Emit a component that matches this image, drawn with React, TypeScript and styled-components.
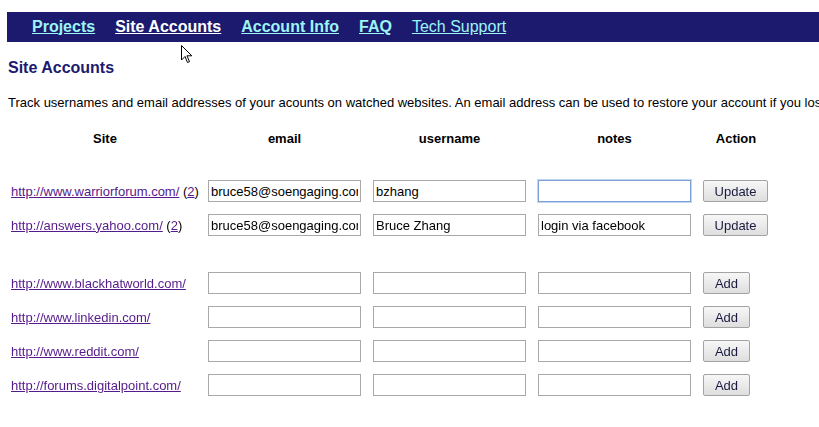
import styled, { createGlobalStyle } from "styled-components"

const GlobalStyle = createGlobalStyle`
    html, body {
        margin: 0;
        padding: 0;
        background: #fff;
        overflow: hidden;
    }
    body {
        font-family: "Liberation Sans", Arial, sans-serif;
        color: #000;
    }
`

const navLinks = [
    { label: "Projects", bold: true },
    { label: "Site Accounts", bold: true, active: true },
    { label: "Account Info", bold: true },
    { label: "FAQ", bold: true },
    { label: "Tech Support", bold: false },
]

type Account = {
    site: string
    count?: number
    email: string
    username: string
    notes: string
    focused?: boolean
}

const saved: Account[] = [
    { site: "http://www.warriorforum.com/", count: 2, email: "bruce58@soengaging.com", username: "bzhang", notes: "", focused: true },
    { site: "http://answers.yahoo.com/", count: 2, email: "bruce58@soengaging.com", username: "Bruce Zhang", notes: "login via facebook" },
]

const suggested = [
    "http://www.blackhatworld.com/",
    "http://www.linkedin.com/",
    "http://www.reddit.com/",
    "http://forums.digitalpoint.com/",
]

const App = () => {
    return (
        <Page>
            <GlobalStyle />
            <NavBar>
                {navLinks.map((l) => (
                    <NavLink key={l.label} href="#" $bold={l.bold} $active={l.active}>
                        {l.label}
                    </NavLink>
                ))}
            </NavBar>
            <Cursor viewBox="0 0 12 19" width="12" height="19">
                <path d="M0.5 0.5 L0.5 15 L4 11.5 L6.5 17.5 L8.5 16.7 L6 10.8 L10.8 10.8 Z" fill="#fff" stroke="#000" strokeWidth="1" />
            </Cursor>

            <Heading>Site Accounts</Heading>
            <Intro>
                Track usernames and email addresses of your acounts on watched websites. An email address can be used to restore your account if you lose your password.
            </Intro>

            <Table>
                <HeadRow>
                    <HeadCell $site>Site</HeadCell>
                    <HeadCell>email</HeadCell>
                    <HeadCell>username</HeadCell>
                    <HeadCell>notes</HeadCell>
                    <HeadCell>Action</HeadCell>
                </HeadRow>

                <Group $top={34}>
                    {saved.map((a) => (
                        <Row key={a.site}>
                            <SiteCell>
                                <SiteLink href="#">{a.site}</SiteLink> (<SiteLink href="#">{a.count}</SiteLink>)
                            </SiteCell>
                            <Field defaultValue={a.email} />
                            <Field defaultValue={a.username} />
                            <Field defaultValue={a.notes} $focused={a.focused} autoFocus={a.focused} />
                            <div>
                                <Button $w={65}>Update</Button>
                            </div>
                        </Row>
                    ))}
                </Group>

                <Group $top={36}>
                    {suggested.map((s) => (
                        <Row key={s}>
                            <SiteCell>
                                <SiteLink href="#">{s}</SiteLink>
                            </SiteCell>
                            <Field />
                            <Field />
                            <Field />
                            <div>
                                <Button $w={47}>Add</Button>
                            </div>
                        </Row>
                    ))}
                </Group>
            </Table>
        </Page>
    )
}

export default App

const Page = styled.div`
    position: relative;
    width: 819px;
    height: 427px;
    overflow: hidden;
    padding-top: 12px;
    box-sizing: border-box;
`

const NavBar = styled.nav`
    display: flex;
    align-items: center;
    gap: 20px;
    height: 30px;
    margin-left: 7px;
    padding: 0 0 1px 25px;
    box-sizing: border-box;
    background: #1c1a6e;
`

const NavLink = styled.a<{ $bold?: boolean; $active?: boolean }>`
    font-size: 16px;
    font-weight: ${(p) => (p.$bold ? "bold" : "normal")};
    color: ${(p) => (p.$active ? "#ffffff" : "#9cf5f5")};
    text-decoration: underline;
    white-space: nowrap;
`

const Cursor = styled.svg`
    position: absolute;
    left: 181px;
    top: 45px;
`

const Heading = styled.h2`
    margin: 17px 0 0 8px;
    font-size: 16px;
    line-height: 18px;
    font-weight: bold;
    color: #1c1a6e;
`

const Intro = styled.p`
    margin: 18px 0 0 8px;
    font-size: 13px;
    line-height: 15px;
    white-space: nowrap;
`

const Table = styled.div`
    margin: 21px 0 0 8px;
`

const columns = `
    display: grid;
    grid-template-columns: 188px 153px 153px 153px 66px;
    column-gap: 12px;
`

const HeadRow = styled.div`
    ${columns}
    height: 15px;
`

const HeadCell = styled.div<{ $site?: boolean }>`
    font-size: 13px;
    line-height: 15px;
    font-weight: bold;
    text-align: center;
    padding-left: ${(p) => (p.$site ? "6px" : "0")};
`

const Group = styled.div<{ $top: number }>`
    display: flex;
    flex-direction: column;
    gap: 12px;
    margin-top: ${(p) => p.$top}px;
`

const Row = styled.div`
    ${columns}
    height: 22px;
    align-items: center;
`

const SiteCell = styled.div`
    padding-left: 3px;
    font-size: 13px;
    white-space: nowrap;
`

const SiteLink = styled.a`
    color: #551a8b;
    text-decoration: underline;
`

const Field = styled.input<{ $focused?: boolean }>`
    width: 153px;
    height: 22px;
    box-sizing: border-box;
    padding: 0 2px;
    border: 1px solid ${(p) => (p.$focused ? "#7b9fd6" : "#a9a9a9")};
    box-shadow: ${(p) => (p.$focused ? "0 0 0 1px #c5d7f0" : "none")};
    font-family: "Liberation Sans", Arial, sans-serif;
    font-size: 13px;
    color: #000;
    background: #fff;
    outline: none;
    caret-color: #000;
`

const Button = styled.button<{ $w: number }>`
    width: ${(p) => p.$w}px;
    height: 22px;
    padding: 0;
    border: 1px solid #a3a3a3;
    border-radius: 2px;
    background: linear-gradient(#f7f7f7, #dedede);
    font-family: "Liberation Sans", Arial, sans-serif;
    font-size: 13px;
    color: #1a1a40;
`
